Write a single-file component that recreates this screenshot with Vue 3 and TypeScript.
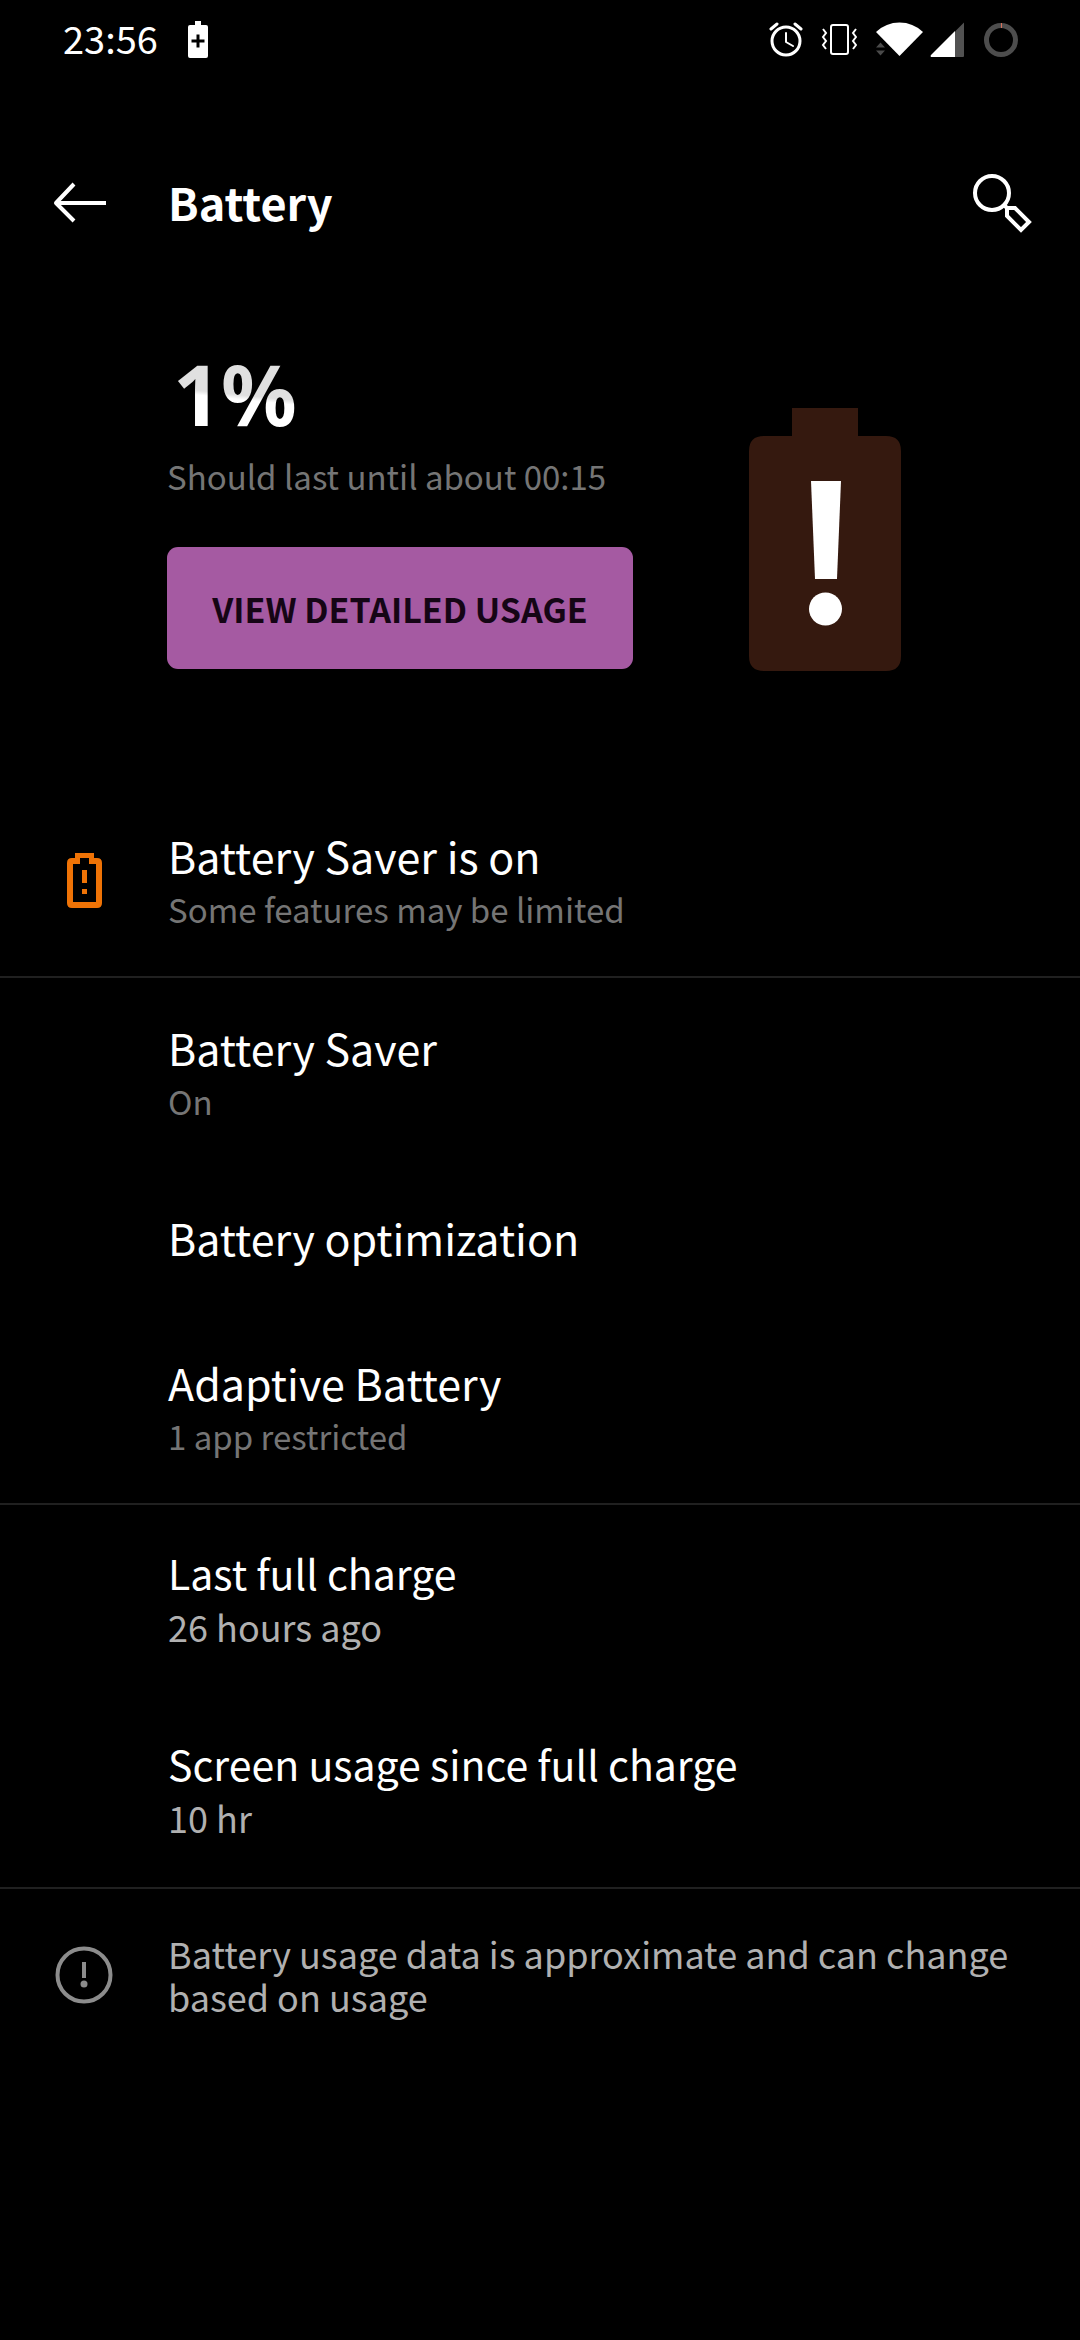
<script setup lang="ts">
interface Item {
  title: string
  summary?: string
  alert?: boolean
}

const clock = '23:56'
const level = '1%'

const sections: { kind: 'setting' | 'stat'; items: Item[] }[] = [
  {
    kind: 'setting',
    items: [{ title: 'Battery Saver is on', summary: 'Some features may be limited', alert: true }],
  },
  {
    kind: 'setting',
    items: [
      { title: 'Battery Saver', summary: 'On' },
      { title: 'Battery optimization' },
      { title: 'Adaptive Battery', summary: '1 app restricted' },
    ],
  },
  {
    kind: 'stat',
    items: [
      { title: 'Last full charge', summary: '26 hours ago' },
      { title: 'Screen usage since full charge', summary: '10 hr' },
    ],
  },
]
</script>

<template>
  <div class="screen">
    <div class="status">
      <span class="clock">{{ clock }}</span>
      <svg class="status-saver" width="22" height="38" viewBox="0 0 22 38" aria-hidden="true">
        <path fill="#fff" fill-rule="evenodd" d="M8 0h6v4h5q2 0 2 2v29q0 2-2 2H3q-2 0-2-2V6q0-2 2-2h5zM9.500 13.500v5H4.500v3h5v5h3v-5h5v-3h-5v-5z" />
      </svg>
      <div class="status-icons">
        <svg width="34" height="36" viewBox="0 0 34 36" fill="none" stroke="#fff" stroke-linecap="round" aria-hidden="true">
          <circle cx="17" cy="19" r="14" stroke-width="3" />
          <path d="M2 7l6-5M32 7l-6-5" stroke-width="3" />
          <path d="M17 11v9l7 4" stroke-width="2" stroke-linejoin="round" />
        </svg>
        <svg width="36" height="34" viewBox="0 0 36 34" fill="none" stroke="#fff" aria-hidden="true">
          <rect x="10" y="2" width="17" height="29" rx="2" stroke-width="2" />
          <path d="M2 6l3 4-3 4 3 4-3 4 3 4M35 6l-3 4 3 4-3 4 3 4-3 4" stroke-width="2" />
        </svg>
        <svg width="48" height="36" viewBox="0 0 48 36" aria-hidden="true">
          <path fill="#fff" d="M24.500 34L1 10Q11 .500 24.500 .500T48 10z" />
          <path fill="#4a4a4a" d="M1 25.500l4.500-5 4.500 5zM1 28.500h9l-4.500 5z" />
        </svg>
        <svg class="signal" width="34" height="36" viewBox="0 0 34 36" aria-hidden="true">
          <path fill="#525252" d="M25 9.500L34 .500V34q0 1-1 1h-8z" />
          <path fill="#fff" d="M25 9v26H1q-1-1 0-2z" />
        </svg>
        <svg width="36" height="36" viewBox="0 0 36 36" fill="none" aria-hidden="true">
          <circle cx="18" cy="18" r="14.500" stroke="#4d4d4d" stroke-width="5" />
          <path d="M18.500 1v5" stroke="#d9705a" stroke-width="1" />
        </svg>
      </div>
    </div>

    <header class="bar">
      <button class="icon-button" type="button" aria-label="Navigate up">
        <svg width="54" height="42" viewBox="0 0 54 42" fill="none" stroke="#fff" stroke-width="4" aria-hidden="true">
          <path d="M21 2L3 21l18 18M3 21h50" stroke-linejoin="round" />
        </svg>
      </button>
      <h1 class="bar-title">Battery</h1>
      <button class="icon-button" type="button" aria-label="Search">
        <svg width="60" height="60" viewBox="0 0 60 60" fill="none" stroke="#fff" stroke-width="4" aria-hidden="true">
          <circle cx="20" cy="20" r="17" />
          <path d="M32 32l3 3h8l14 14-8 8-14-14v-8" />
        </svg>
      </button>
    </header>

    <main>
      <section class="hero">
        <div class="hero-text">
          <p class="level">{{ level }}</p>
          <p class="estimate">Should last until about 00:15</p>
          <button class="usage" type="button">VIEW DETAILED USAGE</button>
        </div>
        <svg class="hero-battery" width="152" height="263" viewBox="0 0 152 263" aria-hidden="true">
          <path fill="#35190f" d="M43 0h66v28h28q15 0 15 15v205q0 15-15 15H15q-15 0-15-15V43q0-15 15-15h28z" />
          <path fill="#fff" d="M62 73h30l-4 98H66z" />
          <circle cx="76.500" cy="201" r="16.500" fill="#fff" />
        </svg>
      </section>

      <ul v-for="(section, i) in sections" :key="i" class="section" :class="section.kind">
        <li v-for="item in section.items" :key="item.title" class="row">
          <div class="lead">
            <svg v-if="item.alert" width="35" height="55" viewBox="0 0 35 55" aria-hidden="true">
              <path
                fill="#ef7306"
                fill-rule="evenodd"
                d="M8 0h19v5h3q5 0 5 5v40q0 5-5 5H5q-5 0-5-5V10q0-5 5-5h3zM13 5v6H6v38h23V11h-7V5zM15 17h5v13h-5zM15 36h5v5h-5z"
              />
            </svg>
          </div>
          <div class="row-text">
            <h2 class="row-title">{{ item.title }}</h2>
            <p v-if="item.summary" class="row-summary">{{ item.summary }}</p>
          </div>
        </li>
      </ul>

      <footer class="note">
        <div class="lead">
          <svg width="58" height="58" viewBox="0 0 58 58" aria-hidden="true">
            <circle cx="29" cy="29" r="26.500" fill="none" stroke="#8c8c8c" stroke-width="4" />
            <path fill="#8c8c8c" d="M27 16h4v16h-4z" />
            <circle cx="29" cy="38" r="3.500" fill="#8c8c8c" />
          </svg>
        </div>
        <p class="note-text">Battery usage data is approximate and can change based on usage</p>
      </footer>
    </main>
  </div>
</template>

<style>
body {
  margin: 0;
  background: #000;
}
</style>

<style scoped>
.screen {
  min-height: 100vh;
  background: #000;
  color: #fff;
  font-family: 'Noto Sans CJK SC', 'Noto Sans', sans-serif;
}

h1,
h2,
p,
ul {
  margin: 0;
  padding: 0;
  font-weight: 400;
  list-style: none;
}

svg {
  display: block;
  flex: none;
}

button {
  border: 0;
  padding: 0;
  font: inherit;
  cursor: pointer;
}

.status {
  display: flex;
  align-items: center;
  height: 80px;
  padding: 0 61px 0 63px;
}

.clock {
  padding-bottom: 4px;
  font-size: 38px;
  line-height: 48px;
}

.status-saver {
  margin-left: 29px;
}

.status-icons {
  display: flex;
  align-items: center;
  gap: 18px;
  margin-left: auto;
}

.signal {
  margin: 0 1px 0 -11px;
}

.bar {
  display: flex;
  align-items: center;
  height: 140px;
  padding: 53px 48px 43px 53px;
}

.icon-button {
  background: none;
}

.bar-title {
  flex: 1;
  margin-left: 61px;
  padding-bottom: 2px;
  font-size: 45px;
  line-height: 58px;
  font-weight: 700;
}

.hero {
  display: flex;
  align-items: flex-end;
  padding: 28px 0 115px 167px;
}

.hero-text {
  padding-bottom: 2px;
}

.level {
  width: max-content;
  padding-left: 6px;
  font-family: 'Noto Sans', sans-serif;
  font-size: 84px;
  line-height: 100px;
  font-weight: 700;
  background: linear-gradient(186deg, #e0e0e0 50%, #fff 54%);
  background-clip: text;
  color: transparent;
}

.estimate {
  margin-top: 7px;
  font-size: 33px;
  line-height: 50px;
  color: #757575;
}

.usage {
  min-width: 466px;
  height: 122px;
  margin-top: 46px;
  padding: 0 40px;
  border-radius: 11px;
  background: #a55aa2;
  color: #150515;
  font-size: 34px;
  font-weight: 700;
}

.hero-battery {
  margin-left: 116px;
}

.section {
  border-bottom: 2px solid #202020;
}

.row {
  display: flex;
  box-sizing: border-box;
  min-height: 145px;
  padding: 40px 48px 42px 0;
}

.lead {
  display: flex;
  flex: none;
  align-items: center;
  justify-content: center;
  width: 168px;
}

.row-title {
  font-size: 43px;
  line-height: 58px;
}

.row-summary {
  font-size: 33px;
  line-height: 50px;
  color: #757575;
}

.stat .row {
  padding: 38px 48px 45px 0;
}

.stat .row-title {
  font-size: 41px;
}

.stat .row-summary {
  font-size: 36px;
  color: #b0b0b0;
}

.note {
  display: flex;
  align-items: center;
  padding: 43px 48px 43px 0;
}

.note-text {
  font-size: 36px;
  line-height: 43px;
  color: #b0b0b0;
}
</style>
